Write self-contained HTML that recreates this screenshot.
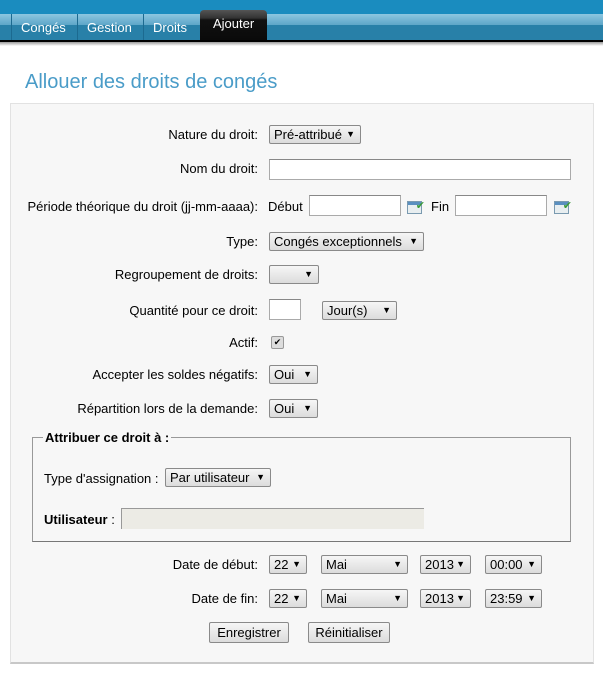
<!DOCTYPE html><html><head><meta charset="utf-8"><style>
body{margin:0;width:603px;height:679px;background:#fff;font-family:"Liberation Sans",sans-serif;font-size:13px;color:#000;position:relative;overflow:hidden}
.a{position:absolute}
.sel{position:absolute;height:19px;border:1px solid #8a8a8a;border-radius:2px;background:linear-gradient(#f6f6f6,#dcdcdc);box-sizing:border-box;font-size:13px;line-height:17px;padding-left:4px}
.sel:after{content:"▼";position:absolute;right:5px;top:0;font-size:9px}
.inp{position:absolute;height:21px;border:1px solid #aaa;border-top-color:#888;background:#fff;box-sizing:border-box}
.lbl{position:absolute;right:345px;text-align:right;white-space:nowrap;line-height:16px;margin-top:1px}
.btn{position:absolute;height:21px;border:1px solid #8a8a8a;border-radius:2px;background:linear-gradient(#f6f6f6,#dcdcdc);box-sizing:border-box;text-align:center;line-height:19px}
.cal{position:absolute;width:15px;height:13px;border:1px solid #7a9ab0;background:linear-gradient(#5a8fc0 0 3px,#e8eef0 3px);box-sizing:border-box}
.cal:after{content:"✔";position:absolute;right:-4px;top:-3px;color:#3a9a3a;font-size:11px}
</style></head><body>
<div class="a" style="left:0;top:0;width:603px;height:14px;background:#1a8cbf"></div>
<div class="a" style="left:0;top:14px;width:603px;height:11px;background:linear-gradient(#8cc6e0,#5ea6c8)"></div>
<div class="a" style="left:0;top:25px;width:603px;height:15px;background:#2880a8"></div>
<div class="a" style="left:0;top:40px;width:603px;height:2px;background:#000"></div>
<div class="a" style="left:0;top:42px;width:603px;height:4px;background:linear-gradient(#999,#fff)"></div>
<div class="a" style="left:11px;top:14px;width:1px;height:26px;background:#1c6a90"></div>
<div class="a" style="left:77px;top:14px;width:1px;height:26px;background:#1c6a90"></div>
<div class="a" style="left:143px;top:14px;width:1px;height:26px;background:#1c6a90"></div>
<div class="a" style="left:21px;top:20px;color:#fff;font-size:13px">Congés</div>
<div class="a" style="left:87px;top:20px;color:#fff;font-size:13px">Gestion</div>
<div class="a" style="left:153px;top:20px;color:#fff;font-size:13px">Droits</div>
<div class="a" style="left:200px;top:10px;width:67px;height:30px;background:linear-gradient(#555 0,#333 8px,#111 10px,#0a0a0a);border-radius:4px 4px 0 0"></div>
<div class="a" style="left:213px;top:16px;color:#fff;font-size:13px">Ajouter</div>
<div class="a" style="left:25px;top:71px;color:#4a9cc8;font-size:20px">Allouer des droits de congés</div>
<div class="a" style="left:10px;top:103px;width:582px;height:558px;background:#f7f7f7;border:1px solid #e2e2e2;border-bottom:2px solid #c8c8c8"></div>

<div class="lbl" style="top:126px">Nature du droit:</div><div class="sel" style="left:269px;top:125px;width:92px">Pré-attribué</div>
<div class="lbl" style="top:160px">Nom du droit:</div><div class="inp" style="left:269px;top:159px;width:302px"></div>
<div class="lbl" style="top:198px">Période théorique du droit (jj-mm-aaaa):</div>
<div class="a" style="left:268px;top:199px">Début</div><div class="inp" style="left:309px;top:195px;width:92px"></div><div class="cal" style="left:407px;top:201px"></div>
<div class="a" style="left:431px;top:199px">Fin</div><div class="inp" style="left:455px;top:195px;width:92px"></div><div class="cal" style="left:554px;top:201px"></div>
<div class="lbl" style="top:233px">Type:</div><div class="sel" style="left:269px;top:232px;width:155px">Congés exceptionnels</div>
<div class="lbl" style="top:266px">Regroupement de droits:</div><div class="sel" style="left:269px;top:265px;width:50px"></div>
<div class="lbl" style="top:302px">Quantité pour ce droit:</div><div class="inp" style="left:269px;top:299px;width:32px"></div><div class="sel" style="left:322px;top:301px;width:75px">Jour(s)</div>
<div class="lbl" style="top:334px">Actif:</div><div class="a" style="left:271px;top:336px;width:11px;height:11px;border:1px solid #999;border-radius:2px;background:#ddd;font-size:9px;line-height:11px;text-align:center">✔</div>
<div class="lbl" style="top:366px">Accepter les soldes négatifs:</div><div class="sel" style="left:269px;top:365px;width:49px">Oui</div>
<div class="lbl" style="top:400px">Répartition lors de la demande:</div><div class="sel" style="left:269px;top:399px;width:49px">Oui</div>

<div class="a" style="left:32px;top:437px;width:537px;height:103px;border:1px solid #999;border-bottom-color:#777"></div>
<div class="a" style="left:43px;top:430px;background:#f7f7f7;padding:0 2px;font-weight:bold">Attribuer ce droit à :</div>
<div class="a" style="left:44px;top:471px">Type d'assignation :</div><div class="sel" style="left:165px;top:468px;width:106px">Par utilisateur</div>
<div class="a" style="left:44px;top:512px"><b>Utilisateur</b> :</div><div class="a" style="left:121px;top:508px;width:303px;height:21px;background:#ecebe5;border-left:1px solid #999;border-top:1px solid #999;box-sizing:border-box"></div>

<div class="lbl" style="top:556px">Date de début:</div>
<div class="sel" style="left:269px;top:555px;width:38px">22</div><div class="sel" style="left:321px;top:555px;width:87px">Mai</div><div class="sel" style="left:420px;top:555px;width:51px">2013</div><div class="sel" style="left:485px;top:555px;width:57px">00:00</div>
<div class="lbl" style="top:590px">Date de fin:</div>
<div class="sel" style="left:269px;top:589px;width:38px">22</div><div class="sel" style="left:321px;top:589px;width:87px">Mai</div><div class="sel" style="left:420px;top:589px;width:51px">2013</div><div class="sel" style="left:485px;top:589px;width:57px">23:59</div>
<div class="btn" style="left:209px;top:622px;width:80px">Enregistrer</div>
<div class="btn" style="left:308px;top:622px;width:82px">Réinitialiser</div>
</body></html>
